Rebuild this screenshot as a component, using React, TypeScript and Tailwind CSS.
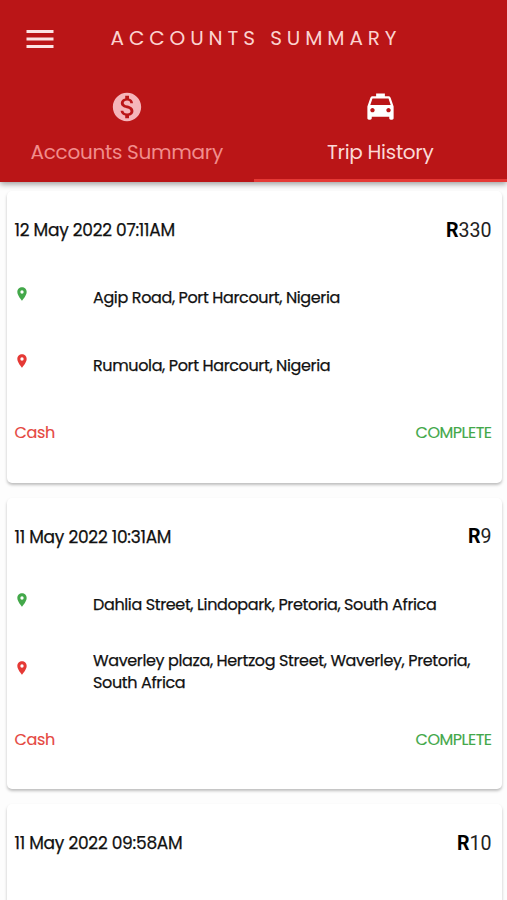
import { MdLocalTaxi, MdLocationOn, MdMenu, MdMonetizationOn } from "react-icons/md";

type Trip = {
   date: string;
   price: string;
   from?: string;
   to?: string;
};

const TRIPS: Trip[] = [
   {
      date: "12 May 2022 07:11AM",
      price: "330",
      from: "Agip Road, Port Harcourt, Nigeria",
      to: "Rumuola, Port Harcourt, Nigeria",
   },
   {
      date: "11 May 2022 10:31AM",
      price: "9",
      from: "Dahlia Street, Lindopark, Pretoria, South Africa",
      to: "Waverley plaza, Hertzog Street, Waverley, Pretoria, South Africa",
   },
   {
      date: "11 May 2022 09:58AM",
      price: "10",
   },
];

const Header = () => {
   return (
      <header className="relative z-10 h-[182px] shrink-0 bg-[#ba1517] shadow-[0_2px_6px_rgba(0,0,0,0.4)]">
         <div className="flex h-[77px] items-center pl-[22px]">
            <MdMenu className="size-[36px] text-[#fbe3e3]" />
            <h1 className="-mt-[1px] ml-[52.5px] whitespace-nowrap text-[20px] tracking-[4.9px] text-[#fbd3d0]">
               ACCOUNTS SUMMARY
            </h1>
         </div>
         <nav className="grid h-[105px] grid-cols-2">
            <div className="flex flex-col items-center pt-[13px] text-[#f18d8c]">
               <MdMonetizationOn className="size-[34px] text-[#f5b5ba]" />
               <span className="mt-[14px] whitespace-nowrap text-[20px] leading-7 tracking-[-0.3px]">
                  Accounts Summary
               </span>
            </div>
            <div className="flex flex-col items-center border-b-[3px] border-[#e53935] pt-[12px] text-[#fbd9d6]">
               <MdLocalTaxi className="size-[35px] text-white" />
               <span className="mt-[14px] whitespace-nowrap text-[20px] leading-7 tracking-[-0.3px]">
                  Trip History
               </span>
            </div>
         </nav>
      </header>
   );
};

const Stop = ({ address, color }: { address: string; color: string }) => (
   <div className="flex h-[67.5px] items-center">
      <MdLocationOn className={`-mt-[7px] -ml-[0.5px] size-4 shrink-0 ${color}`} />
      <p className="mt-[2px] ml-[63px] text-[16px] leading-[22.5px] tracking-[-0.37px] [-webkit-text-stroke:0.25px]">
         {address}
      </p>
   </div>
);

const TripCard = ({ trip }: { trip: Trip }) => {
   return (
      <article className="h-[291.5px] shrink-0 rounded-[5px] bg-white pt-[5px] pr-[10px] pl-[8px] shadow-[0_2px_3px_rgba(0,0,0,0.25)]">
         <div className="flex h-[67.5px] items-center justify-between">
            <p className="mt-[2px] text-[17px] tracking-[-0.25px] [-webkit-text-stroke:0.25px]">{trip.date}</p>
            <p className="mt-[1px] font-[Roboto] text-[19.6px] text-[#222]">
               <b className="text-black">R</b>
               {trip.price}
            </p>
         </div>
         {trip.from && trip.to && (
            <>
               <Stop address={trip.from} color="text-[#43a84a]" />
               <Stop address={trip.to} color="text-[#e53935]" />
               <div className="flex h-[67.5px] items-center justify-between pt-[2px] text-[16px] [-webkit-text-stroke:0.15px]">
                  <span className="tracking-[-0.3px] text-[#e5483f]">Cash</span>
                  <span className="tracking-[-0.5px] text-[#43a84a]">COMPLETE</span>
               </div>
            </>
         )}
      </article>
   );
};

const App = () => {
   return (
      <div className="flex h-[900px] w-[507px] flex-col overflow-hidden bg-[#fdfdfd] font-[Poppins,Inter,sans-serif] text-[#111]">
         <Header />
         <main className="flex flex-col gap-[15px] pt-[9px] pr-[5.5px] pl-[6.5px]">
            {TRIPS.map((trip) => (
               <TripCard key={trip.date} trip={trip} />
            ))}
         </main>
      </div>
   );
};

export default App;
